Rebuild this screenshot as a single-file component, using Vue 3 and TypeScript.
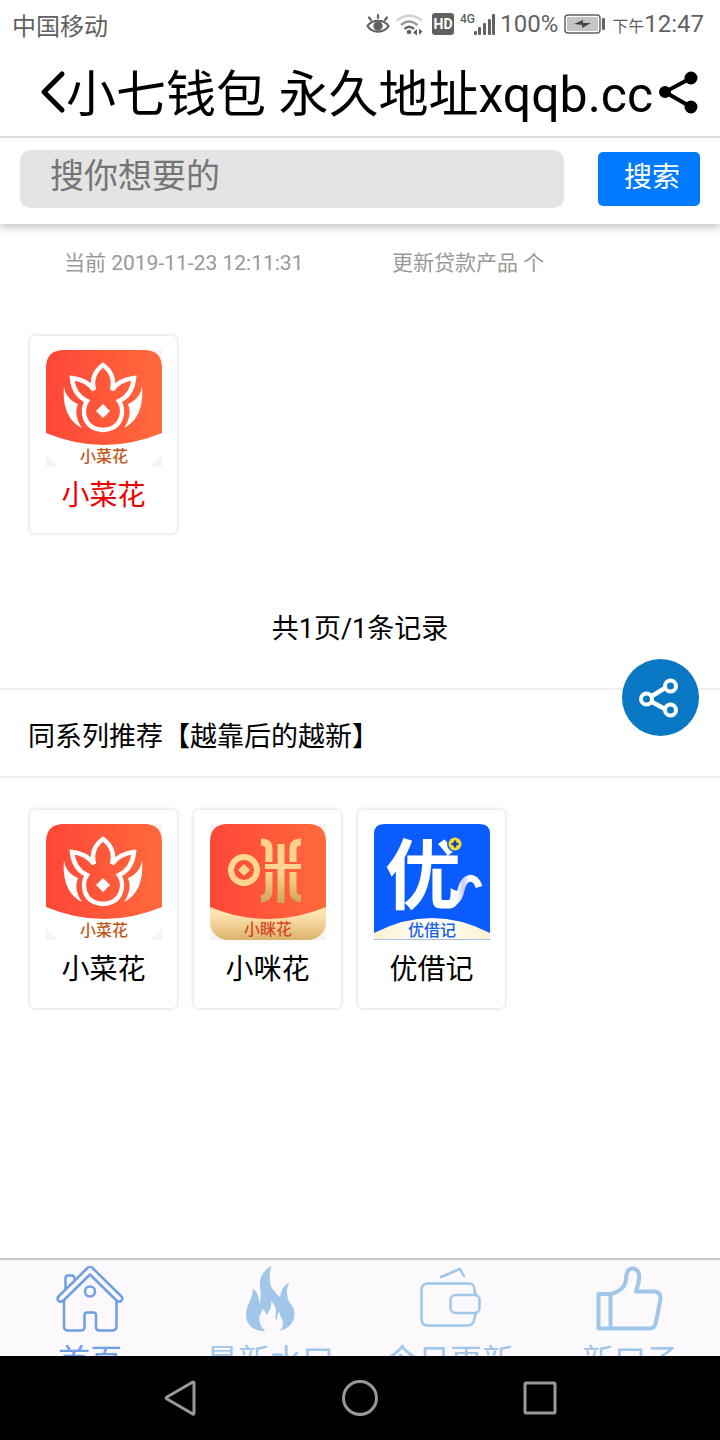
<script setup lang="ts">
import { ref } from 'vue'

type Art = 'flower' | 'coin' | 'you'

interface Product {
  name: string
  art: Art
  highlight?: boolean
}

interface Section {
  id: string
  items: Product[]
}

const keyword = ref('')

const results: Section = {
  id: 'results',
  items: [{ name: '小菜花', art: 'flower', highlight: true }],
}

const related: Section = {
  id: 'related',
  items: [
    { name: '小菜花', art: 'flower' },
    { name: '小咪花', art: 'coin' },
    { name: '优借记', art: 'you' },
  ],
}

const tabs = [
  { label: '首页', icon: 'home' },
  { label: '最新水口', icon: 'fire' },
  { label: '今日更新', icon: 'wallet' },
  { label: '新口子', icon: 'thumb' },
]
</script>

<template>
  <div class="screen">
    <div class="status">
      <span class="carrier">中国移动</span>
      <div class="indicators">
        <svg class="eye" width="24" height="24" viewBox="0 0 24 24" fill="none" stroke="#616161" stroke-width="2.2" stroke-linecap="round">
          <path d="M1.500 14C6 7 18 7 22.500 14C18 21.500 6 21.500 1.500 14Z" />
          <circle cx="12" cy="14" r="3.600" fill="#616161" />
          <path d="M12 6V3M5 8L3 5.500M19 8L21 5.500" />
        </svg>
        <svg class="wifi" width="30" height="24" viewBox="0 0 30 24" fill="none" stroke-width="2.400">
          <path d="M1 8.500Q13 -1 26 8.500" stroke="#cfcfcf" />
          <path d="M5 13Q13 6 21.500 13" stroke="#9a9a9a" />
          <path d="M8.500 17Q13 12.500 18 17" stroke="#616161" />
          <circle cx="13" cy="20" r="2.300" fill="#616161" />
          <path d="M17 20.500L21 17V23.500ZM26.500 19.500L23 16.500V23Z" fill="#616161" />
        </svg>
        <svg class="hd" width="22" height="22" viewBox="0 0 22 22">
          <rect width="22" height="22" rx="3" fill="#616161" />
          <text x="11" y="16" text-anchor="middle" fill="#fff" font-size="14" font-weight="700">HD</text>
        </svg>
        <svg class="signal" width="34" height="24" viewBox="0 0 34 24" fill="#616161">
          <text x="0" y="11" font-size="12" font-weight="500">4G</text>
          <rect x="14" y="19" width="3" height="4" rx="1" />
          <rect x="18" y="15" width="3" height="8" rx="1" />
          <rect x="23" y="11" width="3" height="12" rx="1" />
          <rect x="28" y="7" width="3" height="16" rx="1" />
          <rect x="32" y="2" width="3" height="21" rx="1" />
        </svg>
        <span class="percent">100%</span>
        <svg class="battery" width="42" height="20" viewBox="0 0 42 20">
          <rect x="1" y="1" width="35" height="18" rx="3" fill="#fff" stroke="#616161" stroke-width="1.500" />
          <rect x="3" y="3" width="31" height="14" rx="1" fill="#c4c4c4" />
          <path d="M10 10L19 6V9H27L18 14V11Z" fill="#444" />
          <rect x="38" y="4" width="3" height="12" rx="1" fill="#616161" />
        </svg>
        <span class="clock"><small>下午</small>12:47</span>
      </div>
    </div>

    <header class="header">
      <button class="icon-button" aria-label="返回">
        <svg width="26" height="50" viewBox="0 0 26 50" fill="none" stroke="#000" stroke-width="5" stroke-linecap="round" stroke-linejoin="round">
          <path d="M22 6L4 24L22 42" />
        </svg>
      </button>
      <h1>小七钱包 永久地址xqqb.cc</h1>
      <button class="icon-button share" aria-label="分享">
        <svg width="42" height="50" viewBox="0 0 42 50" fill="#000" stroke="#000" stroke-width="4">
          <path d="M33 10L7 24L33 39" fill="none" />
          <circle cx="7" cy="24" r="4" />
          <circle cx="33" cy="10" r="4.500" />
          <circle cx="33" cy="39" r="4.500" />
        </svg>
      </button>
    </header>

    <form class="search" @submit.prevent>
      <input v-model="keyword" type="text" placeholder="搜你想要的" aria-label="搜你想要的" />
      <button type="submit">搜索</button>
    </form>

    <main>
      <div class="meta">
        <span>当前 2019-11-23 12:11:31</span>
        <span>更新贷款产品 个</span>
      </div>

      <template v-for="section in [results, related]" :key="section.id">
        <h2 v-if="section.id === 'related'">同系列推荐【越靠后的越新】</h2>
        <div class="grid" :class="section.id">
          <a v-for="item in section.items" :key="item.name" class="card" :class="{ highlight: item.highlight }" href="#">
            <svg v-if="item.art === 'flower'" class="logo" viewBox="0 0 116 116">
              <defs>
                <linearGradient :id="section.id + '-red'"><stop offset="0" stop-color="#ff4638" /><stop offset="1" stop-color="#ff6a3c" /></linearGradient>
              </defs>
              <path d="M104 0H116V12M0 104V116H12M104 116H116V104" fill="#f8f3f3" />
              <rect width="116" height="116" rx="18" fill="#fff" />
              <path d="M0 83V18Q0 0 18 0H98Q116 0 116 18V83Q58 107 0 83Z" :fill="`url(#${section.id}-red)`" />
              <path d="M57 15C49 21 45 29 48 40C43 33 35 29 26 28C27 38 32 47 41 51C35 60 37 79 57 80C77 79 79 60 73 51C82 47 87 38 88 28C79 29 71 33 66 40C69 29 65 21 57 15Z" fill="none" stroke="#fff" stroke-width="4.500" stroke-linejoin="miter" />
              <path d="M18 36C16 59 24 72 36 78C30 69 29 61 32 54C23 50 19 44 18 36ZM96 36C98 59 90 72 78 78C84 69 85 61 82 54C91 50 95 44 96 36ZM57 54L64 61L57 68L50 61Z" fill="#fff" />
              <text x="58" y="112" text-anchor="middle" font-size="16" font-weight="500" fill="#c05a1c">小菜花</text>
            </svg>

            <svg v-else-if="item.art === 'coin'" class="logo" viewBox="0 0 116 116">
              <defs>
                <linearGradient id="coin-red"><stop offset="0" stop-color="#ff4638" /><stop offset="1" stop-color="#ff6a3c" /></linearGradient>
                <linearGradient id="coin-gold" x1="0" y1="14" x2="0" y2="79" gradientUnits="userSpaceOnUse"><stop offset="0" stop-color="#ffd08a" /><stop offset=".5" stop-color="#ffd591" /><stop offset="1" stop-color="#cfa55c" /></linearGradient>
                <linearGradient id="coin-base" x1="0" x2="0" y1="0" y2="1"><stop offset=".78" stop-color="#ffe3b0" /><stop offset="1" stop-color="#d9b36c" /></linearGradient>
              </defs>
              <path d="M104 0H116V12M0 104V116H12M104 116H116V104M12 0H0V12" fill="#f8f3f3" />
              <rect width="116" height="116" rx="18" fill="url(#coin-base)" />
              <path d="M0 83V18Q0 0 18 0H98Q116 0 116 18V83Q58 107 0 83Z" fill="url(#coin-red)" />
              <circle cx="34" cy="46" r="13" fill="none" stroke="#ffd591" stroke-width="6" />
              <path d="M34 40L40 46L34 52L28 46Z" fill="#ffd591" />
              <g fill="none" stroke="url(#coin-gold)" stroke-width="7">
                <path d="M51 18Q59 18 59 25V38M91 18Q83 18 83 25V38M51 75Q59 74 59 66V48M91 75Q83 74 83 66V48" />
                <path d="M71 20V79" />
              </g>
              <rect x="55" y="40" width="36" height="5" fill="#ffd591" />
              <text x="58" y="111" text-anchor="middle" font-size="16" font-weight="500" fill="#d94724">小眯花</text>
            </svg>

            <svg v-else class="logo" viewBox="0 0 116 116">
              <defs>
                <linearGradient id="you-tail"><stop offset="0" stop-color="#fff" /><stop offset=".35" stop-color="#fff" /><stop offset=".55" stop-color="#c9ccfa" /><stop offset=".75" stop-color="#fff" /></linearGradient>
                <linearGradient id="you-base"><stop offset="0" stop-color="#fff1cf" /><stop offset=".5" stop-color="#fff" /><stop offset="1" stop-color="#fff1cf" /></linearGradient>
              </defs>
              <path d="M0 115V10Q0 0 10 0H106Q116 0 116 10V115Z" fill="#0b5cff" />
              <path d="M0 109Q58 79 116 109V115H0Z" fill="url(#you-base)" />
              <rect y="115" width="116" height="1" fill="#a9bedd" />
              <text x="49" y="79" text-anchor="middle" font-size="76" font-weight="700" fill="#fff">优</text>
              <path d="M70 80Q84 81 87 66C90 52 101 50 105 63" fill="none" stroke="url(#you-tail)" stroke-width="7" />
              <circle cx="81" cy="20" r="8" fill="#0b5cff" />
              <circle cx="81" cy="20" r="6.500" fill="#f4dc3c" />
              <path d="M81 16.500V23.500M77.500 20H84.500" stroke="#17429c" stroke-width="2.500" />
              <text x="58" y="112" text-anchor="middle" font-size="16" font-weight="500" fill="#1763e6">优借记</text>
            </svg>
            <span>{{ item.name }}</span>
          </a>
        </div>
        <p v-if="section.id === 'results'" class="pager">共1页/1条记录</p>
      </template>
    </main>

    <button class="fab" aria-label="分享页面">
      <svg width="77" height="77" viewBox="0 0 77 77" fill="none" stroke="#fff" stroke-width="4">
        <path d="M30 37L43 29M30 43L43 50" stroke-width="4.500" />
        <circle cx="24.500" cy="40" r="5.500" />
        <circle cx="48.500" cy="27" r="5.500" />
        <circle cx="48.500" cy="51" r="5.500" />
      </svg>
    </button>

    <nav class="tabs" aria-label="主导航">
      <a v-for="tab in tabs" :key="tab.icon" href="#" :class="{ active: tab.icon === 'home' }">
        <svg width="68" height="66" viewBox="0 0 68 66" fill="none" stroke="currentColor" stroke-width="2.500" stroke-linejoin="round" stroke-linecap="round">
          <template v-if="tab.icon === 'home'">
            <path d="M31.500 2Q34 -1 36.500 2L65 30Q68 33 65 35Q63 37 60 34L34 8.500L8 34Q5 37 3 35Q0 33 3 30Z" />
            <path d="M9.500 23V12Q9.500 9.500 12 9.500H16Q18.500 9.500 18.500 13" />
            <path d="M8 35V60Q8 64.500 12 64.500H25Q28.500 64.500 28.500 61V49Q28.500 46.500 31 46.500H37Q40 46.500 40 49V61Q40 64.500 43.500 64.500H56Q60.500 64.500 60.500 60V35" />
            <circle cx="34" cy="25.500" r="5" />
          </template>
          <path v-else-if="tab.icon === 'fire'" fill="currentColor" stroke="none" d="M35.700 0C27 4 23 12 24 20C25 27 25 33 23.500 38C23 31 21 25 16.500 22.500C18 31 10 38 10 49C10 59 18 65 29.500 65.500C24 60 22 54 24 49C25.500 46 26 45 26 43C28 44 30 46 30.500 49.500C34 44 36 40 35 35C38 38 40 41 40 45.500C40 50 38 51 41 55C41 51 41 48 44 46C43 50 47 53 47 57C47 60 46 63 43 65C53 63 59 56 58.500 47C58 40 54 39 52 33C50 26 51 21 53.500 16.500C48 19 45 24 44 31C39 26 34 22 34 15C33 9 34 4 35.700 0Z" />
          <template v-else-if="tab.icon === 'wallet'">
            <path d="M60 29L58.500 25Q59 17.500 53 17.500H12Q5.500 17.500 5.500 24V53Q5.500 59.500 12 59.500H51Q58 59.500 58.500 52L60 47" />
            <rect x="34.500" y="29" width="29" height="18" rx="5" />
            <path d="M25 11L44 3L48 10" />
          </template>
          <path v-else stroke-width="4" d="M2.500 28V62.500H14.500V28ZM14.500 28C23 26 29 21 30 14C30 6 32 2.500 36.500 2.500C42 2.500 44 8 43 14C42 19 41 22 40 25.500H58Q65 26 64.500 33L60 56Q58.500 62.500 54 62.500H14.500" />
        </svg>
        <span>{{ tab.label }}</span>
      </a>
    </nav>

    <div class="system">
      <button aria-label="系统返回">
        <svg width="40" height="40" viewBox="0 0 40 40"><path d="M34 5V35Q34 37 32 35.500L7 21Q5 20 7 19L32 4.500Q34 3.500 34 5Z" /></svg>
      </button>
      <button aria-label="主屏幕">
        <svg width="40" height="40" viewBox="0 0 40 40"><circle cx="20" cy="20" r="16.500" /></svg>
      </button>
      <button aria-label="最近任务">
        <svg width="40" height="40" viewBox="0 0 40 40"><rect x="5" y="5" width="30" height="30" rx="1" /></svg>
      </button>
    </div>
  </div>
</template>

<style>
body {
  background: #fff;
}
</style>

<style scoped>
.screen {
  display: flex;
  flex-direction: column;
  min-height: 100vh;
  color: #000;
  font-family: Roboto, "Noto Sans CJK SC", sans-serif;
}

.screen * {
  box-sizing: border-box;
}

button,
input {
  margin: 0;
  padding: 0;
  border: 0;
  font-family: inherit;
}

button {
  background: none;
  cursor: pointer;
}

svg {
  display: block;
  flex: none;
}

a {
  color: inherit;
  text-decoration: none;
}

.status {
  display: flex;
  align-items: center;
  justify-content: space-between;
  height: 48px;
  padding: 0 16px 0 12px;
  color: #616161;
  font-size: 24px;
}

.indicators {
  display: flex;
  align-items: center;
  gap: 6px;
}

.signal {
  overflow: visible;
}

.clock small {
  font-size: 16px;
}

.header {
  display: flex;
  align-items: center;
  height: 90px;
  padding: 2px 20px 0 40px;
  border-bottom: 2px solid #ddd;
}

h1 {
  margin: 0;
  padding-top: 4px;
  font-size: 50px;
  font-weight: 400;
  line-height: 80px;
  white-space: nowrap;
}

.share {
  margin-left: auto;
}

.search {
  display: flex;
  align-items: center;
  gap: 34px;
  padding: 12px 20px 16px;
  box-shadow: 0 2px 10px rgba(0, 0, 0, 0.3);
  clip-path: inset(0 0 -20px 0);
}

.search input {
  flex: 1;
  min-width: 0;
  height: 58px;
  padding: 0 30px 6px;
  border-radius: 10px;
  background: #e4e4e4;
  font-size: 34px;
}

.search input::placeholder {
  color: #757575;
  opacity: 1;
}

.search button {
  height: 54px;
  padding: 0 20px 8px 26px;
  border-radius: 5px;
  background: #007bff;
  color: #fff;
  font-size: 28px;
}

main {
  flex: 1;
}

.meta {
  display: grid;
  grid-template-columns: 1fr 1fr;
  padding: 23px 0 0 64px;
  color: #999;
  font-size: 21px;
  line-height: 32px;
}

.grid {
  display: flex;
  flex-wrap: wrap;
  gap: 17px;
  padding: 0 30px;
}

.results {
  margin-top: 57px;
}

.related {
  margin: 32px 0;
}

.card {
  display: flex;
  flex-direction: column;
  align-items: center;
  width: 147px;
  padding: 14px 0 8px;
  border-radius: 5px;
  box-shadow: 0 0 4px rgba(0, 0, 0, 0.2);
  font-size: 28px;
  line-height: 60px;
}

.card.highlight {
  padding-bottom: 7px;
  color: #f00000;
}

.logo {
  width: 116px;
  height: 116px;
}

.pager {
  margin: 76px 0 39px;
  font-size: 27px;
  line-height: 40px;
  text-align: center;
}

h2 {
  margin: 0;
  padding: 8px 28px 0;
  border: solid #eee;
  border-width: 2px 0;
  font-size: 27px;
  font-weight: 400;
  line-height: 78px;
}

.fab {
  position: fixed;
  top: 659px;
  right: 21px;
  border-radius: 50%;
  background: #0878c4;
}

.tabs {
  display: grid;
  grid-template-columns: repeat(4, 1fr);
  height: 98px;
  overflow: hidden;
  padding-top: 6px;
  border-top: 2px solid #c8c8c8;
  background: #fbf9fb;
  color: #a0c6e9;
  font-size: 32px;
  line-height: 58px;
}

.tabs a {
  display: flex;
  flex-direction: column;
  align-items: center;
}

.tabs .active {
  color: #6f9fe4;
}

.system {
  display: grid;
  grid-template-columns: repeat(3, 1fr);
  height: 84px;
  padding: 0 calc(100% / 8);
  background: #000;
}

.system button {
  display: flex;
  align-items: center;
  justify-content: center;
}

.system svg {
  fill: none;
  stroke: #999;
  stroke-width: 3px;
}
</style>
